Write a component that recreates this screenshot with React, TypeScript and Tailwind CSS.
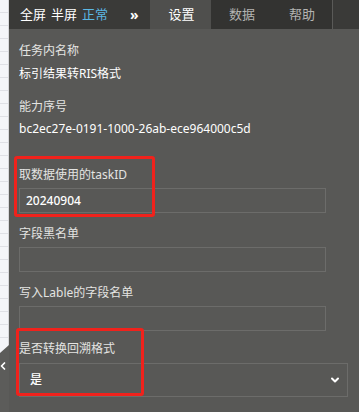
import { ChevronDown, ChevronLeft } from 'lucide-react';

const font = { fontFamily: '"Noto Sans", "Noto Sans CJK SC", sans-serif' };

function Field({ label, value }: { label: string; value?: string }) {
  return (
    <div className="flex flex-col">
      <div className="text-[12px] leading-[18px] text-[#e4e4e2]">{label}</div>
      <div className="mt-[4px] h-[25px] w-[307px] border border-[#6c6c6a] px-[6px] text-[12px] leading-[23px] font-medium text-white">
        {value}
      </div>
    </div>
  );
}

export default function App() {
  return (
    <div className="relative flex h-[412px] w-[359px] overflow-hidden bg-[#585856]" style={font}>
      {/* table behind the panel */}
      <div className="relative flex w-[9px] shrink-0 flex-col border-r border-[#d8d8dc] bg-[#f4f5f9]">
        {Array.from({ length: 26 }).map((_, i) => (
          <div key={i} className="h-[13px] shrink-0 border-b border-[#dfe0e6]" />
        ))}
        <div className="absolute left-0 top-[345px] h-[67px] w-[9px] bg-[#5c5c5a] [clip-path:polygon(0_8px,100%_0,100%_100%,0_100%)]">
          <ChevronLeft className="absolute left-[-3px] top-[15px] h-[12px] w-[12px] text-white" strokeWidth={3.5} />
        </div>
      </div>

      <div className="flex min-w-0 flex-1 flex-col">
        {/* header */}
        <div className="flex h-[29px] shrink-0 bg-[#3a3a38] text-[13px]">
          <div className="flex w-[141px] items-center pl-[11px]">
            <span className="text-white">全屏</span>
            <span className="ml-[5px] text-white">半屏</span>
            <span className="ml-[5px] text-[#5cb8e4]">正常</span>
            <span className="ml-[22px] text-[14px] font-bold text-white">»</span>
          </div>
          <div className="flex w-[61px] items-center justify-center bg-[#4f4f4d] pl-[2px] text-white">设置</div>
          <div className="flex w-[122px] border-r border-[#5a5a58] bg-[#333331] text-[#b4b4b2]">
            <div className="flex w-[60px] items-center justify-center pl-[2px]">数据</div>
            <div className="flex w-[60px] items-center justify-center pl-[2px]">帮助</div>
          </div>
          <div className="flex-1" />
        </div>

        {/* body */}
        <div className="flex flex-col pl-[10px] pt-[13px]">
          <div className="text-[12px] leading-[18px] text-[#e4e4e2]">任务内名称</div>
          <div className="mt-[5px] text-[12px] leading-[18px] text-white">标引结果转RIS格式</div>
          <div className="mt-[15px] text-[12px] leading-[18px] text-[#e4e4e2]">能力序号</div>
          <div className="mt-[4px] text-[12px] leading-[18px] text-white">bc2ec27e-0191-1000-26ab-ece964000c5d</div>

          <div className="mt-[28px] flex flex-col gap-[12px]">
            <Field label="取数据使用的taskID" value="20240904" />
            <Field label="字段黑名单" />
            <Field label="写入Lable的字段名单" />
          </div>

          <div className="mt-[9px] text-[12px] leading-[18px] text-[#e4e4e2]">是否转换回溯格式</div>
          <div className="mt-[5px] flex h-[34px] w-[329px] items-center justify-between border border-[#6c6c6a] pl-[10px] pr-[6px] text-[12px] font-medium text-white">
            <span>是</span>
            <ChevronDown className="h-[12px] w-[12px] text-white" strokeWidth={4} />
          </div>
        </div>
      </div>

      {/* red annotation boxes */}
      <div className="pointer-events-none absolute left-[14px] top-[156px] h-[61px] w-[141px] rounded-[3px] border-[3px] border-[#f0221c]" />
      <div className="pointer-events-none absolute left-[16px] top-[328px] h-[68px] w-[128px] rounded-[3px] border-[3px] border-[#f0221c]" />
    </div>
  );
}
